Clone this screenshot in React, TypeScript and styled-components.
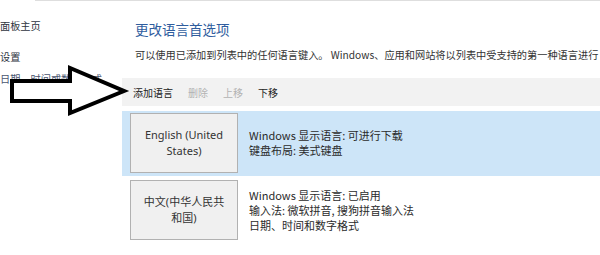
import React from 'react'
import styled, { createGlobalStyle } from 'styled-components'

const GlobalStyle = createGlobalStyle`
  html, body {
    margin: 0;
    padding: 0;
    background: #fff;
  }
  body {
    font-family: "Noto Sans CJK SC", "Noto Sans", sans-serif;
    color: #2b2b2b;
  }
`

const Page = styled.div`
  position: relative;
  width: 600px;
  height: 255px;
  overflow: hidden;
  background: #fff;
`

const TopRule = styled.div`
  margin-left: 35px;
  height: 1px;
  background: #dedede;
`

const Body = styled.div`
  display: flex;
`

const Sidebar = styled.nav`
  width: 122px;
  flex-shrink: 0;
  display: flex;
  flex-direction: column;
  padding-top: 18px;
`

const SideLink = styled.div<{ $gap?: number; $muted?: boolean }>`
  margin-top: ${({ $gap }) => $gap ?? 0}px;
  font-size: 10.2px;
  line-height: 13px;
  white-space: nowrap;
  color: ${({ $muted }) => ($muted ? '#4a5670' : '#2e3440')};
`

const Main = styled.main`
  flex: 1;
  min-width: 0;
  display: flex;
  flex-direction: column;
`

const Title = styled.h1`
  margin: 20px 0 0;
  padding-left: 13px;
  font-size: 13.5px;
  line-height: 17px;
  font-weight: 400;
  color: #2f5d9e;
  white-space: nowrap;
`

const Description = styled.p`
  margin: 9px 0 0;
  padding-left: 13px;
  font-size: 10.2px;
  line-height: 15px;
  color: #333;
  white-space: nowrap;
`

const Toolbar = styled.div`
  margin-top: 16px;
  height: 28px;
  display: flex;
  align-items: center;
  gap: 15px;
  padding-left: 11px;
  background: #f2f2f2;
`

const ToolButton = styled.span<{ $disabled?: boolean }>`
  font-size: 10px;
  line-height: 15px;
  color: ${({ $disabled }) => ($disabled ? '#b3b3b3' : '#222')};
`

const List = styled.div`
  margin-top: 5px;
  display: flex;
  flex-direction: column;
  gap: 2px;
`

const Row = styled.div<{ $selected?: boolean }>`
  height: 65px;
  box-sizing: border-box;
  padding: 2px 8px 3px;
  display: flex;
  align-items: center;
  background: ${({ $selected }) => ($selected ? '#cde5f8' : 'transparent')};
`

const LangButton = styled.div`
  width: 108px;
  height: 60px;
  box-sizing: border-box;
  flex-shrink: 0;
  display: flex;
  align-items: center;
  justify-content: center;
  text-align: center;
  padding: 0 8px;
  border: 1px solid #b1b1b1;
  background: #f0f0f0;
  font-family: "Noto Sans", "Noto Sans CJK SC", sans-serif;
  font-size: 11px;
  line-height: 16px;
  color: #333;
`

const Details = styled.div`
  margin-left: 11px;
  font-size: 11px;
  line-height: 15px;
  color: #2b2b2b;
  white-space: nowrap;
`

const ArrowOverlay = styled.svg`
  position: absolute;
  left: 0;
  top: 0;
  pointer-events: none;
`

const languages = [
  {
    name: 'English (United States)',
    selected: true,
    lines: ['Windows 显示语言: 可进行下载', '键盘布局: 美式键盘'],
  },
  {
    name: '中文(中华人民共和国)',
    selected: false,
    lines: ['Windows 显示语言: 已启用', '输入法: 微软拼音, 搜狗拼音输入法', '日期、时间和数字格式'],
  },
]

export default function App() {
  return (
    <Page>
      <GlobalStyle />
      <TopRule />
      <Body>
        <Sidebar>
          <SideLink>面板主页</SideLink>
          <SideLink $gap={18}>设置</SideLink>
          <SideLink $gap={9} $muted>
            日期、时间或数字格式
          </SideLink>
        </Sidebar>
        <Main>
          <Title>更改语言首选项</Title>
          <Description>
            可以使用已添加到列表中的任何语言键入。 Windows、应用和网站将以列表中受支持的第一种语言进行
          </Description>
          <Toolbar>
            <ToolButton>添加语言</ToolButton>
            <ToolButton $disabled>删除</ToolButton>
            <ToolButton $disabled>上移</ToolButton>
            <ToolButton>下移</ToolButton>
          </Toolbar>
          <List>
            {languages.map((lang) => (
              <Row key={lang.name} $selected={lang.selected}>
                <LangButton>{lang.name}</LangButton>
                <Details>
                  {lang.lines.map((line) => (
                    <div key={line}>{line}</div>
                  ))}
                </Details>
              </Row>
            ))}
          </List>
        </Main>
      </Body>
      <ArrowOverlay width="130" height="120" viewBox="0 0 130 120">
        <polygon
          points="12,81 70,81 70,68 124,91 70,113 70,101 12,101"
          fill="#fff"
          stroke="#000"
          strokeWidth="4"
          strokeLinejoin="miter"
        />
      </ArrowOverlay>
    </Page>
  )
}
